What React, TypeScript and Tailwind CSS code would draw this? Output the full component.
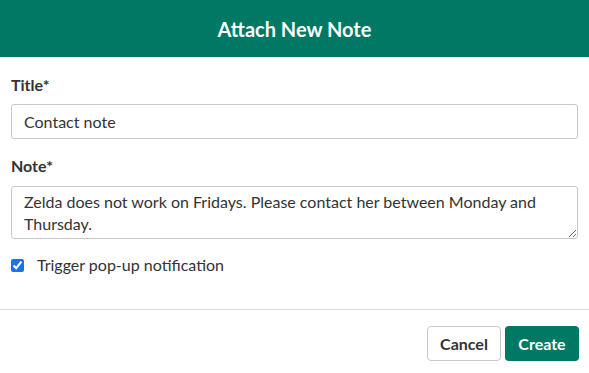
import React from "react";

export default function App() {
  return (
    <div
      className="w-[589px] h-[373px] bg-white flex flex-col text-[#333]"
      style={{ fontFamily: "Lato, 'Open Sans', sans-serif" }}
    >
      <div className="h-[57px] bg-[#007864] flex items-center justify-center">
        <h1 className="text-white text-[20px] font-bold leading-none">Attach New Note</h1>
      </div>
      <div className="px-[11px] pt-[18px] flex flex-col">
        <label className="text-[16px] font-bold leading-[20px] text-[#333]">Title*</label>
        <input
          className="mt-[9px] h-[35px] w-[567px] border border-[#c8c8c8] rounded-[3px] px-[12px] text-[16px] text-[#333] outline-none"
          defaultValue="Contact note"
        />
        <label className="mt-[17px] text-[16px] font-bold leading-[20px] text-[#333]">Note*</label>
        <textarea
          className="mt-[10px] h-[53px] w-[567px] border border-[#c8c8c8] rounded-[3px] px-[12px] pt-[4px] text-[16px] leading-[22px] text-[#333] outline-none resize-y"
          defaultValue="Zelda does not work on Fridays. Please contact her between Monday and Thursday."
        />
        <label className="mt-[18px] flex items-center gap-[13px] h-[16px]">
          <input type="checkbox" defaultChecked className="w-[13px] h-[13px] m-0 accent-[#1a73e8]" />
          <span className="text-[16px] leading-[20px] text-[#333]">Trigger pop-up notification</span>
        </label>
      </div>
      <div className="mt-[36px] border-t border-[#dcdcdc]" />
      <div className="flex justify-end gap-[4px] pr-[10px] pt-[16px]">
        <button className="h-[35px] w-[74px] border border-[#c8c8c8] rounded-[4px] bg-white text-[16px] font-bold text-[#333]">
          Cancel
        </button>
        <button className="h-[35px] w-[74px] rounded-[4px] bg-[#007864] text-[16px] font-bold text-white">
          Create
        </button>
      </div>
    </div>
  );
}
